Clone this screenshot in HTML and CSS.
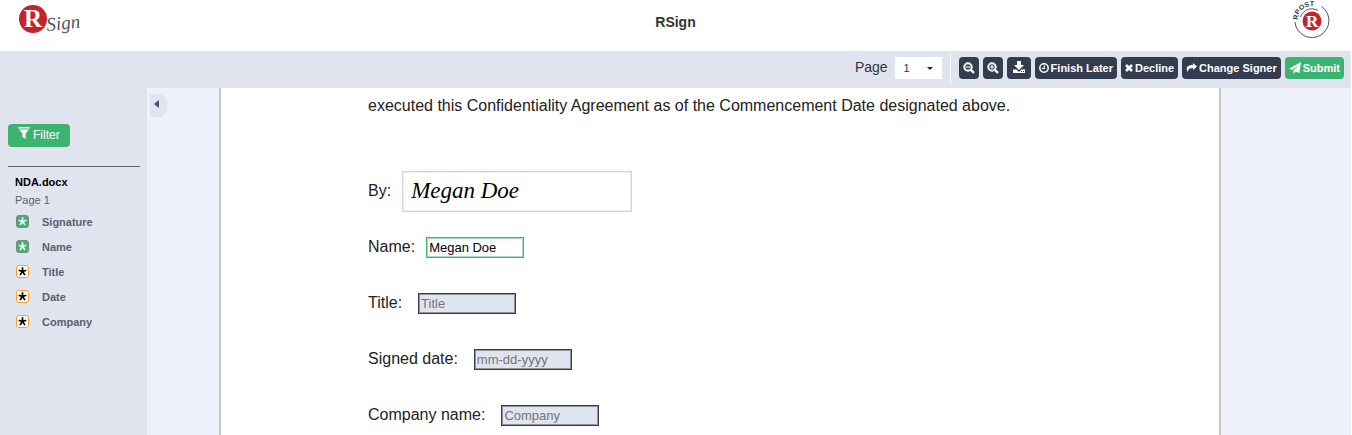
FILE: index.html
```html
<!DOCTYPE html>
<html lang="en">
<head>
    <meta charset="UTF-8">
    <meta name="viewport" content="width=device-width, initial-scale=1.0">
    <title>RSign</title>
    <link rel="stylesheet" href="styles.css">
</head>
<body>
    <header class="header">
        <svg class="logo" width="72" height="44" viewBox="0 0 72 44" role="img" aria-label="RSign">
            <circle cx="21" cy="19" r="14" fill="#c4242c"/>
            <text class="logo-r" x="12" y="27" font-size="25">R</text>
            <text class="logo-sign" x="35" y="31" font-size="19" transform="rotate(-6 35 31)">Sign</text>
        </svg>
        <h1>RSign</h1>
        <svg class="seal" width="40" height="40" viewBox="0 0 40 40" role="img" aria-label="RPost">
            <defs>
                <path id="seal-arc" d="M7 20 A13.500 13.500 0 0 1 30 10"/>
            </defs>
            <path d="M30.500 6.500 A17 17 0 1 1 4 22" fill="none" stroke="#55555a" stroke-width="1"/>
            <circle cx="21" cy="21" r="9.500" fill="#c4242c"/>
            <path d="M9.500 17 A12 12 0 0 1 27 10.500" fill="none" stroke="#55555a" stroke-width="1"/>
            <text class="seal-text" font-size="7"><textPath href="#seal-arc">RPOST</textPath></text>
            <text class="logo-r" x="15" y="27" font-size="17">R</text>
        </svg>
    </header>

    <div class="toolbar">
        <label for="page">Page</label>
        <div class="page-select">
            <select id="page">
                <option>1</option>
            </select>
        </div>
        <span class="divider"></span>
        <button type="button" class="btn icon-btn" aria-label="Zoom out">
            <svg width="12" height="12" viewBox="0 0 12 12" fill="none" stroke="#fff" stroke-width="2">
                <circle cx="5" cy="5" r="3.700"/>
                <path d="M8 8L11 11" stroke-width="2.400"/>
                <path d="M3 5H7" stroke-width="1.200"/>
            </svg>
        </button>
        <button type="button" class="btn icon-btn" aria-label="Zoom in">
            <svg width="12" height="12" viewBox="0 0 12 12" fill="none" stroke="#fff" stroke-width="2">
                <circle cx="5" cy="5" r="3.700"/>
                <path d="M8 8L11 11" stroke-width="2.400"/>
                <path d="M3 5H7M5 3V7" stroke-width="1.200"/>
            </svg>
        </button>
        <button type="button" class="btn icon-btn" aria-label="Download">
            <svg width="16" height="14" viewBox="0 0 16 14" fill="#fff">
                <path d="M6 0H10V4H13L8 9L3 4H6Z"/>
                <path d="M2 8.500H5.500L8 11L10.500 8.500H14V12H2Z"/>
                <path d="M10 10.500H11M12 10.500H13" stroke="#343c50"/>
            </svg>
        </button>
        <button type="button" class="btn">
            <svg width="10" height="12" viewBox="0 0 10 12" fill="none" stroke="#fff">
                <circle cx="5" cy="6" r="4.200" stroke-width="1.500"/>
                <path d="M5.300 3.500V6.500H3" stroke-width="1.200"/>
            </svg>
            Finish Later
        </button>
        <button type="button" class="btn">
            <svg width="8" height="12" viewBox="0 0 8 12" stroke="#fff" stroke-width="2.600">
                <path d="M1 3L7 9M7 3L1 9"/>
            </svg>
            Decline
        </button>
        <button type="button" class="btn">
            <svg width="11" height="12" viewBox="0 0 11 12" fill="#fff">
                <path d="M7 1L11 4.500L7 8V6C3.500 6 1.500 7 2.200 10.500C-0.500 6.500 0 3.200 7 3Z"/>
            </svg>
            Change Signer
        </button>
        <button type="button" class="btn btn-green">
            <svg width="12" height="12" viewBox="0 0 12 12" fill="#fff">
                <path d="M12 0L10.300 11L6.500 9.400L4.500 12V8.500L10 3L3.300 8L0 6.800Z"/>
            </svg>
            Submit
        </button>
    </div>

    <main class="main">
        <nav class="sidebar">
            <button type="button" class="btn-green filter">
                <svg width="12" height="16" viewBox="0 0 12 16" fill="#fff">
                    <path d="M0 0H12V1.500H0Z"/>
                    <path d="M1 2.500H11L7.500 6.500V12L4.500 10V6.500Z"/>
                </svg>
                Filter
            </button>
            <hr>
            <h2>NDA.docx</h2>
            <p>Page 1</p>
            <ul>
                <li class="done"><svg width="13" height="13" viewBox="0 0 13 13"><path d="M6.500 6.500V1.500M6.500 6.500L2 5M6.500 6.500L11 5M6.500 6.500L3.500 10.800M6.500 6.500L9.500 10.800"/></svg><a href="#signature">Signature</a></li>
                <li class="done"><svg width="13" height="13" viewBox="0 0 13 13"><path d="M6.500 6.500V1.500M6.500 6.500L2 5M6.500 6.500L11 5M6.500 6.500L3.500 10.800M6.500 6.500L9.500 10.800"/></svg><a href="#name">Name</a></li>
                <li><svg width="13" height="13" viewBox="0 0 13 13"><path d="M6.500 6.500V1.500M6.500 6.500L2 5M6.500 6.500L11 5M6.500 6.500L3.500 10.800M6.500 6.500L9.500 10.800"/></svg><a href="#title">Title</a></li>
                <li><svg width="13" height="13" viewBox="0 0 13 13"><path d="M6.500 6.500V1.500M6.500 6.500L2 5M6.500 6.500L11 5M6.500 6.500L3.500 10.800M6.500 6.500L9.500 10.800"/></svg><a href="#date">Date</a></li>
                <li><svg width="13" height="13" viewBox="0 0 13 13"><path d="M6.500 6.500V1.500M6.500 6.500L2 5M6.500 6.500L11 5M6.500 6.500L3.500 10.800M6.500 6.500L9.500 10.800"/></svg><a href="#company">Company</a></li>
            </ul>
        </nav>

        <div class="gutter">
            <button type="button" class="collapse" aria-label="Collapse sidebar">
                <svg width="5" height="8" viewBox="0 0 5 8"><path d="M5 0V8L0 4Z" fill="#4b5673"/></svg>
            </button>
        </div>

        <form class="document">
            <p>executed this Confidentiality Agreement as of the Commencement Date designated above.</p>
            <div class="row row-near">
                <label for="signature">By:</label>
                <button type="button" class="signature" id="signature">Megan Doe</button>
            </div>
            <div class="row row-near">
                <label for="name">Name:</label>
                <input type="text" class="filled" id="name" value="Megan Doe">
            </div>
            <div class="row">
                <label for="title">Title:</label>
                <input type="text" id="title" placeholder="Title">
            </div>
            <div class="row">
                <label for="date">Signed date:</label>
                <input type="text" id="date" placeholder="mm-dd-yyyy">
            </div>
            <div class="row">
                <label for="company">Company name:</label>
                <input type="text" id="company" placeholder="Company">
            </div>
        </form>
    </main>
</body>
</html>
```

FILE: styles.css
```css
* {
    box-sizing: border-box;
}
body {
    display: flex;
    flex-direction: column;
    height: 100vh;
    margin: 0;
    padding-right: 1px;
    overflow: hidden;
    background-color: white;
    font-family: "Liberation Sans", Arial, sans-serif;
    color: #333;
}
button, input, select {
    font-family: inherit;
}
button {
    border: none;
    cursor: pointer;
}
svg {
    flex: none;
}

.header {
    display: grid;
    grid-template-columns: 1fr auto 1fr;
    align-items: start;
    padding: 0 20px 0 12px;
    height: 51px;
    flex: none;
}
.header h1 {
    margin: 0;
    padding-left: 8px;
    font-size: 14px;
    line-height: 44px;
}
.seal {
    justify-self: end;
}
.logo-r {
    font-family: "Liberation Serif", serif;
    font-weight: bold;
    fill: white;
}
.logo-sign {
    font-family: "Liberation Serif", serif;
    font-style: italic;
    fill: #4b5666;
}
.seal-text {
    font-weight: bold;
    fill: #333;
}

.toolbar {
    display: flex;
    align-items: center;
    justify-content: flex-end;
    gap: 4px;
    height: 37px;
    flex: none;
    padding: 0 7px 3px 0;
    background-color: #e0e4ee;
}
.toolbar label {
    padding: 0 3px 3px 0;
    font-size: 14px;
}
.page-select {
    position: relative;
}
.page-select select {
    display: block;
    width: 47px;
    height: 22px;
    padding: 0 9px;
    border: none;
    border-radius: 0;
    appearance: none;
    background-color: white;
    color: #333;
    font-size: 11px;
}
.page-select::after {
    content: "";
    position: absolute;
    right: 9px;
    top: 10px;
    border: 3px solid transparent;
    border-top-color: #222;
    border-bottom: none;
    pointer-events: none;
}
.divider {
    width: 1px;
    height: 30px;
    margin: 0 4px;
    background-color: white;
}
.btn {
    display: flex;
    align-items: center;
    gap: 2px;
    height: 22px;
    padding: 0 4px;
    border-radius: 4px;
    background-color: #343c50;
    color: white;
    font-size: 11px;
    font-weight: bold;
    white-space: nowrap;
}
.btn-green {
    background-color: #3cb371;
    color: white;
}

.main {
    display: flex;
    flex: 1;
    min-height: 0;
    padding-right: 130px;
    background-color: #eef1fa;
}
.sidebar {
    width: 147px;
    flex: none;
    padding: 36px 7px 0 8px;
    background-color: #e0e4ee;
    color: #5b6070;
    font-size: 11px;
}
.filter {
    display: flex;
    align-items: center;
    gap: 3px;
    height: 23px;
    padding: 0 10px 1px;
    border-radius: 4px;
    font-size: 12px;
}
.sidebar hr {
    margin: 19px 0 6px;
    border: none;
    border-top: 1px solid #5b6070;
}
.sidebar h2, .sidebar p {
    margin: 0;
    padding-left: 7px;
    font-size: 11px;
    line-height: 18px;
}
.sidebar h2 {
    color: black;
}
.sidebar ul {
    margin: 0;
    padding: 0 0 0 8px;
    list-style: none;
}
.sidebar li {
    display: flex;
    align-items: center;
    gap: 13px;
    height: 25px;
    font-weight: bold;
}
.sidebar li svg {
    border: 1px solid #f5a02c;
    border-radius: 3px;
    background-color: white;
    stroke: black;
    stroke-width: 2;
}
.sidebar .done svg {
    border-color: #7d8a82;
    background-color: #3cb371;
    stroke: white;
}
.sidebar a {
    color: inherit;
    text-decoration: none;
}

.gutter {
    width: 72px;
    flex: none;
    padding: 6px 0 0 3px;
}
.collapse {
    display: flex;
    align-items: center;
    width: 17px;
    height: 23px;
    padding: 0 0 3px 4px;
    border-radius: 0 8px 8px 0;
    background-color: #e0e4ee;
}

.document {
    flex: 1;
    padding: 8px 40px 0 147px;
    overflow: hidden;
    border: 2px solid #c6c7cc;
    border-width: 0 2px;
    background-color: white;
    color: #222;
    font-size: 16px;
}
.document p {
    margin: 0 0 47px;
    line-height: 20px;
}
.row {
    display: flex;
    align-items: center;
    gap: 16px;
    height: 56px;
}
.row-near {
    gap: 11px;
}
.document input {
    width: 98px;
    height: 21px;
    padding: 0 2px;
    border: 1px solid #343c50;
    box-shadow: inset 0 0 0 1px #8d94a3;
    background-color: #e0e4ee;
    color: black;
    font-size: 13px;
}
.document input::placeholder {
    color: #757575;
}
.document input.filled {
    border-color: #3cb371;
    box-shadow: inset 0 0 0 1px #a8dcc0;
    background-color: white;
}
.signature {
    width: 230px;
    height: 41px;
    padding: 0 8px;
    border: 1px solid #d4d4d4;
    box-shadow: inset 0 0 0 1px #eee;
    background-color: white;
    color: black;
    font-family: "Homemade Apple", "Liberation Serif", cursive;
    font-size: 23px;
    font-style: italic;
    text-align: left;
}
```
